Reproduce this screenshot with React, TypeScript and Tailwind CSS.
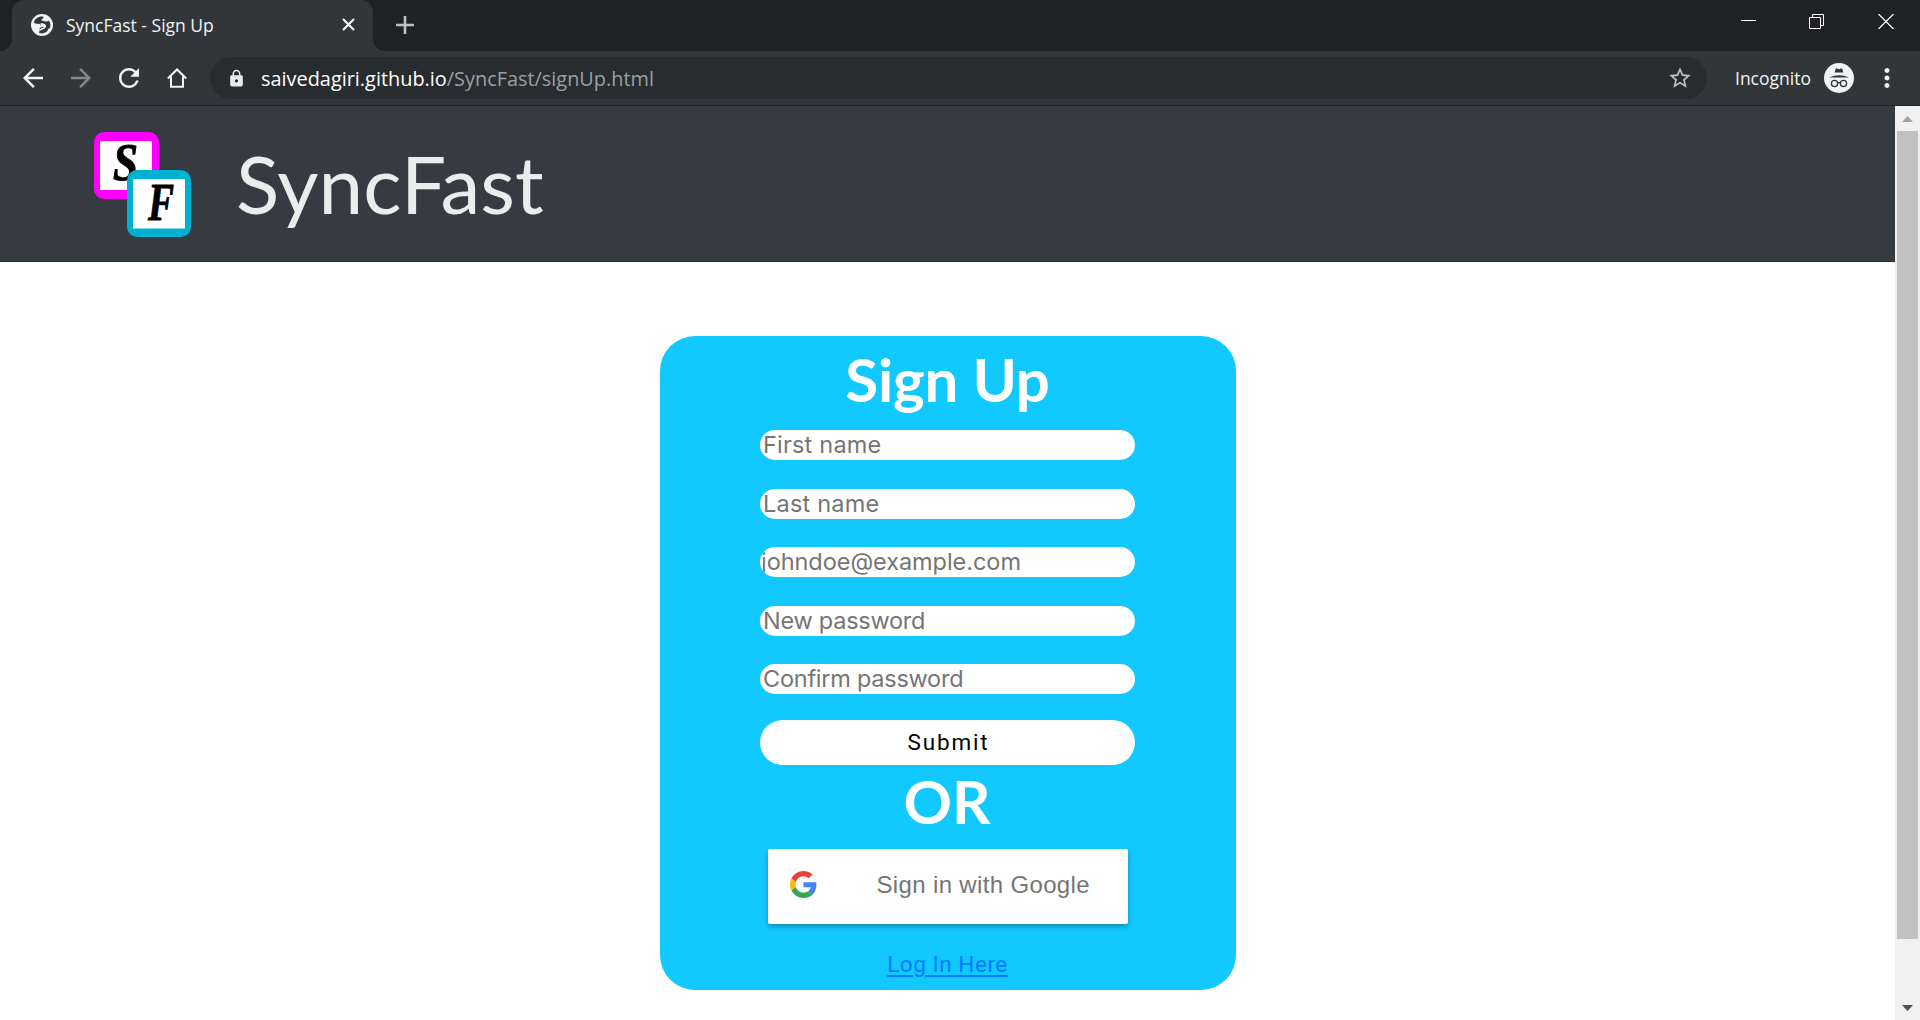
import React from "react";
import {
  MdLock,
  MdStarBorder,
  MdMoreVert,
  MdArrowBack,
  MdArrowForward,
  MdRefresh,
} from "react-icons/md";

const fields = [
  { name: "first", placeholder: "First name", tracking: "placeholder:tracking-[0.2px]" },
  { name: "last", placeholder: "Last name", tracking: "placeholder:tracking-[0.2px]" },
  { name: "email", placeholder: "johndoe@example.com", tracking: "indent-[-2px] placeholder:tracking-[-0.05px]" },
  { name: "password", placeholder: "New password", tracking: "placeholder:tracking-[-0.25px]" },
  { name: "confirm", placeholder: "Confirm password", tracking: "placeholder:tracking-[-0.25px]" },
];

const Globe: React.FC = () => (
  <svg className="size-[22px]" viewBox="0 0 22 22">
    <circle cx="11" cy="11" r="11" fill="#f1f3f4" />
    <path
      d="M12 2.600C7.500 2 4 4.500 2.800 8.500c1 .9 2.800 1.300 5 1.200 1.600 0 1.200 1.900 3 2.100 2 .1 1.200 1.300-.6 1.500-1.300.2-1.700 1-1.500 2.200.2 1.500-.8 2.300-.4 3.400 3.500 1.200 6.500.1 8.500-2.300-.3-1.200.5-1.900 2.100-2.300 1-2.800.5-5.700-1-7.900-1.100.9-2.800 1.400-4.400.9-1.300-.5-2.900-.3-3.100-1.300-.2-1.200 2.200-1.300 2.100-2.300z"
      fill="#323639"
    />
    <path d="M9.500 9.300c1.800-.3 4.300.1 5.300 1.700.8 1.500-.5 3.500-2.500 4.200-1.500.5-2.300 1.500-3.700 1.300.3-1.400 1.300-2.200 3-2.400 1.200-.3 1.200-1.200 0-1.600-1.500-.5-2.700-1.600-2.100-3.200z" fill="#f1f3f4" />
  </svg>
);

const TabStrip: React.FC = () => (
  <div className="flex h-[51px] bg-[#323639]">
    <div className="w-3 bg-[#202124] rounded-br-xl" />
    <div className="w-[361px] bg-[#202124]">
      <div className="flex items-center h-full rounded-t-xl bg-[#323639] pl-[19px] pr-4 pb-[2px]">
        <Globe />
        <span className="ml-[13px] text-[17.5px] leading-6 text-[#f1f3f4] whitespace-nowrap">
          SyncFast - Sign Up
        </span>
        <svg className="ml-auto mr-[2px] size-[13px]" viewBox="0 0 13 13">
          <path d="M1 1l11 11M12 1L1 12" stroke="#f1f3f4" strokeWidth="2.2" />
        </svg>
      </div>
    </div>
    <div className="flex flex-1 items-center bg-[#202124] rounded-bl-xl pl-[23px] pb-[1px]">
      <svg className="size-[18px]" viewBox="0 0 18 18">
        <path d="M9 0v18M0 9h18" stroke="#bdc1c6" strokeWidth="2.6" />
      </svg>
      <div className="flex items-center ml-auto mr-[26px] mb-[8px]">
        <svg className="w-[15px] h-[15px]" viewBox="0 0 15 15">
          <path d="M0 6.5h15" stroke="#fff" />
        </svg>
        <svg className="w-[15px] h-[15px] ml-[53px]" viewBox="0 0 15 15" fill="none" stroke="#fff">
          <path d="M.5 3.5h11v11H.5zM3.5 3.5v-3h11v11h-3" />
        </svg>
        <svg className="w-[16px] h-[15px] ml-[54px]" viewBox="0 0 16 15">
          <path d="M.5 0l15 15M15.5 0L.5 15" stroke="#fff" strokeWidth="1.2" />
        </svg>
      </div>
    </div>
  </div>
);

const Incognito: React.FC = () => (
  <svg className="size-[30px]" viewBox="0 0 30 30">
    <circle cx="15" cy="15" r="15" fill="#f1f3f4" />
    <g fill="#323639">
      <path d="M11.800 5.300l3.200.9 3.200-.9 1.100 4.300h-8.600z" />
      <path d="M5 14.500q10-4.600 20 0z" />
    </g>
    <g fill="none" stroke="#323639" strokeWidth="1.3">
      <circle cx="10.500" cy="20.500" r="3.100" />
      <circle cx="19.500" cy="20.500" r="3.100" />
      <path d="M13.500 20.200q1.500-1 3 0" />
    </g>
  </svg>
);

const Toolbar: React.FC = () => (
  <div className="flex items-center h-[55px] bg-[#323639] border-b border-[#202225] pl-[18px]">
    <MdArrowBack className="size-[30px] text-[#f1f3f4]" />
    <MdArrowForward className="size-[30px] ml-[18px] text-[#85888b]" />
    <MdRefresh className="size-[30px] ml-[18px] text-[#f1f3f4]" />
    <svg className="w-5 h-5 ml-[23px]" viewBox="0 0 20 20" fill="none" stroke="#f1f3f4" strokeWidth="2">
      <path d="M.8 10.500L10 1.500l9.200 9M4 8.500V18.800h12V8.500" />
    </svg>
    <div className="flex items-center w-[1497px] h-[42px] ml-[23px] rounded-full bg-[#282c2f] pl-[17px] pr-[14px]">
      <MdLock className="size-[19px] text-[#e8eaed]" />
      <span className="ml-[15px] pt-[2px] text-[19.9px] leading-7 text-white whitespace-nowrap">
        saivedagiri.github.io<span className="text-[#9aa0a6]">/SyncFast/signUp.html</span>
      </span>
      <MdStarBorder className="size-[26px] ml-auto text-[#bdc1c6]" />
    </div>
    <span className="ml-[28px] text-[17.5px] leading-6 text-[#f1f3f4]">Incognito</span>
    <div className="ml-[13px]">
      <Incognito />
    </div>
    <MdMoreVert className="size-[30px] ml-[18px] text-[#f1f3f4]" />
  </div>
);

const Logo: React.FC = () => (
  <svg className="w-[98px] h-[106px] mt-[2px]" viewBox="0 0 98 106">
    <rect width="65" height="67" rx="10" fill="#f0f" />
    <rect x="6" y="9" width="52" height="49" fill="#fff" />
    <text
      x="19"
      y="48"
      fontFamily="'Liberation Serif', serif"
      fontWeight="700"
      fontStyle="italic"
      fontSize="53"
      textLength="25"
      lengthAdjust="spacingAndGlyphs"
      stroke="#000"
      strokeWidth="1"
    >
      S
    </text>
    <rect x="33" y="38" width="64" height="67" rx="10" fill="#00b0d0" />
    <rect x="39" y="47" width="52" height="49.500" fill="#fff" />
    <text
      x="54"
      y="88"
      fontFamily="'Liberation Serif', serif"
      fontWeight="700"
      fontStyle="italic"
      fontSize="53"
      textLength="26"
      lengthAdjust="spacingAndGlyphs"
      stroke="#000"
      strokeWidth="1"
    >
      F
    </text>
  </svg>
);

const GoogleG: React.FC = () => (
  <svg className="size-[27px]" viewBox="0 0 48 48">
    <path fill="#EA4335" d="M24 9.5c3.540 0 6.710 1.220 9.210 3.600l6.850-6.850C35.900 2.380 30.470 0 24 0 14.620 0 6.510 5.380 2.560 13.220l7.980 6.190C12.430 13.720 17.740 9.500 24 9.500z" />
    <path fill="#4285F4" d="M46.980 24.550c0-1.570-.15-3.090-.38-4.550H24v9.020h12.940c-.58 2.960-2.260 5.480-4.780 7.180l7.730 6c4.510-4.180 7.090-10.360 7.090-17.650z" />
    <path fill="#FBBC05" d="M10.530 28.590c-.48-1.450-.76-2.990-.76-4.590s.27-3.140.76-4.590l-7.980-6.190C.92 16.460 0 20.120 0 24c0 3.880.92 7.540 2.560 10.780l7.970-6.190z" />
    <path fill="#34A853" d="M24 48c6.480 0 11.930-2.130 15.890-5.810l-7.730-6c-2.150 1.450-4.920 2.300-8.160 2.300-6.260 0-11.570-4.220-13.470-9.910l-7.980 6.190C6.510 42.620 14.620 48 24 48z" />
  </svg>
);

const SignUpCard: React.FC = () => (
  <div className="flex flex-col items-center w-[576px] h-[654px] mt-[74px] mx-auto pt-[7px] rounded-[35px] bg-[#11c8ff]">
    <h1 className="font-['Lato',sans-serif] font-bold text-[60px] leading-[72px] tracking-[-0.2px] text-white">
      Sign Up
    </h1>
    <form className="flex flex-col w-[375px] mt-[15px] gap-[28.5px]">
      {fields.map((f) => (
        <input
          key={f.name}
          name={f.name}
          placeholder={f.placeholder}
          className={`w-full h-[30px] px-[3px] rounded-[15px] bg-white text-[23.5px] leading-[30px] placeholder:text-[#757575] font-['Inter',sans-serif] ${f.tracking}`}
        />
      ))}
      <button
        type="button"
        className="w-full h-[45px] -mt-[3px] pt-[1px] rounded-full bg-white text-black text-[22.5px] tracking-[1.8px] pl-[2px] font-['Roboto',sans-serif]"
      >
        Submit
      </button>
    </form>
    <h1 className="mr-[1px] font-['Lato',sans-serif] font-bold text-[60px] leading-[72px] text-white">OR</h1>
    <button
      type="button"
      className="flex items-center w-[360px] h-[75px] mt-3 pl-[22px] pb-[3px] rounded-[2px] bg-white shadow-[0_3px_5px_0_rgba(0,0,0,0.27)]"
    >
      <GoogleG />
      <span className="ml-[60px] text-2xl tracking-[0.35px] text-[#757575] whitespace-nowrap font-['Liberation_Sans',sans-serif]">
        Sign in with Google
      </span>
    </button>
    <a
      href="#"
      className="mt-[25px] text-[22.5px] leading-[30px] tracking-[0.55px] text-[#007bff] underline decoration-2 underline-offset-[3px] font-['Roboto',sans-serif]"
    >
      Log In Here
    </a>
  </div>
);

const Scrollbar: React.FC = () => (
  <div className="flex flex-col items-center w-[25px] h-full bg-[#f1f1f1]">
    <svg className="w-[11px] h-[6px] mt-[10px]" viewBox="0 0 11 6">
      <path d="M5.500 0L11 6H0z" fill="#a3a3a3" />
    </svg>
    <div className="w-[21px] h-[808px] mt-[9px] bg-[#c1c1c1]" />
    <svg className="w-[11px] h-[6px] mt-auto mb-[9px]" viewBox="0 0 11 6">
      <path d="M0 0h11L5.500 6z" fill="#505050" />
    </svg>
  </div>
);

export default function App() {
  return (
    <div className="flex flex-col w-[1920px] h-[1020px] overflow-hidden bg-white font-['Open_Sans',sans-serif]">
      <TabStrip />
      <Toolbar />
      <div className="flex flex-1 min-h-0">
        <main className="flex-1">
          <header className="flex items-center h-[156px] pl-[94px] bg-[#363a41] border-b border-[#2c3036]">
            <Logo />
            <span className="ml-[44px] mb-[1px] text-[80px] leading-[96px] text-[#ebecec] font-['Lato',sans-serif]">
              SyncFast
            </span>
          </header>
          <SignUpCard />
        </main>
        <Scrollbar />
      </div>
    </div>
  );
}
